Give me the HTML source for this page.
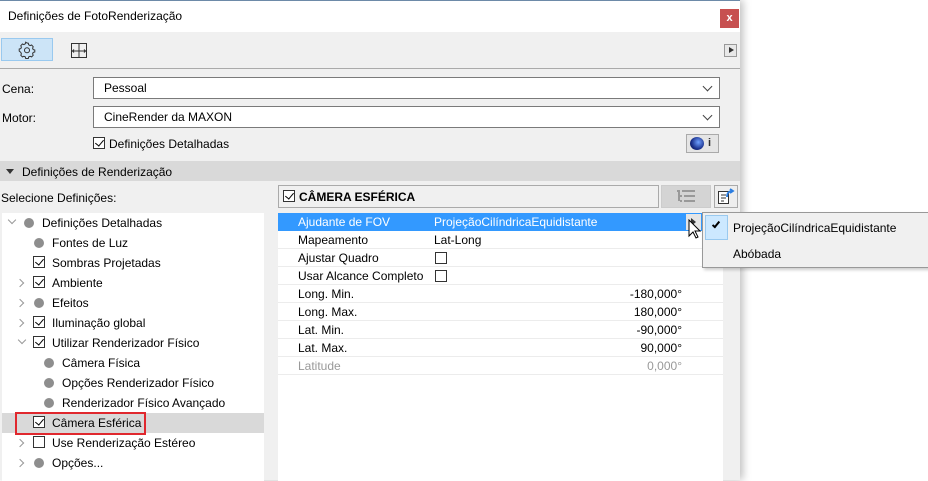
<!DOCTYPE html>
<html><head><meta charset="utf-8"><style>
*{box-sizing:border-box;margin:0;padding:0}
body{width:928px;height:480px;background:#fff;font-family:"Liberation Sans",sans-serif;font-size:12px;color:#000;position:relative;overflow:hidden}
.a{position:absolute}
.dlg{left:0;top:0;width:740px;height:480px;background:#f0f0f0;box-shadow:3px 0 8px rgba(0,0,0,.25);border-top:1px solid #6d8aa8}
.cb{position:absolute;width:12px;height:12px;border:1px solid #333;background:#fff}
.cb.c::after{content:"";position:absolute;left:3px;top:0px;width:4px;height:7px;border:solid #000;border-width:0 1.6px 1.6px 0;transform:rotate(40deg)}
.dd{position:absolute;left:93px;width:627px;height:22px;border:1px solid #7a7a7a;background:#fff;padding:3px 10px}
.dd::after{content:"";position:absolute;right:8px;top:5px;width:6px;height:6px;border:solid #444;border-width:0 1px 1px 0;transform:rotate(45deg)}
.dot{position:absolute;width:10px;height:10px;border-radius:50%;background:#8e8e8e}
.arr{position:absolute;width:6px;height:6px;border:solid #999;border-width:0 1.3px 1.3px 0}
.r{position:absolute;left:0;width:445px;height:18px;border-bottom:1px solid #ececec}
.r span{position:absolute;top:2px}
</style></head><body>
<div class="a dlg">
 <div class="a" style="left:0;top:0;width:740px;height:31px;background:#fff"></div>
 <div class="a" style="left:8px;top:8px;font-size:12px">Definições de FotoRenderização</div>
 <div class="a" style="left:720px;top:8px;width:19px;height:19px;background:#c75050;color:#fff;font-size:11px;text-align:center;line-height:18px;font-weight:bold">x</div>
 <div class="a" style="left:1px;top:37px;width:52px;height:23px;background:#cce4f7;border:1px solid #99c9ef"></div>
 <svg class="a" style="left:18px;top:40px" width="18" height="18" viewBox="0 0 18 18"><path d="M9 2l1.3.2.4 1.6 1.4.8 1.5-.6 1.6 1.7-.6 1.5.6 1.4 1.6.4v2l-1.6.4-.6 1.4.6 1.5-1.6 1.6-1.5-.6-1.4.6-.4 1.6H7.7l-.4-1.6-1.4-.6-1.5.6-1.6-1.6.6-1.5-.6-1.4L1.2 10V8l1.6-.4.6-1.4-.6-1.5L4.4 3l1.5.6 1.4-.8.4-1.6z" fill="none" stroke="#333" stroke-width="1"/><circle cx="9" cy="9.2" r="2.5" fill="none" stroke="#333"/></svg>
 <svg class="a" style="left:71px;top:42px" width="16" height="15"><rect x=".5" y=".5" width="15" height="14" fill="none" stroke="#333"/><path d="M8 1v13M1 8h14M3 6.5l-1.5 1.5L3 9.5M13 6.5l1.5 1.5L13 9.5" fill="none" stroke="#333"/></svg>
 <div class="a" style="left:724px;top:43px;width:13px;height:13px;border:1px solid #999;background:#e8e8e8"></div>
 <div class="a" style="left:729px;top:46px;border-left:5px solid #333;border-top:3.5px solid transparent;border-bottom:3.5px solid transparent"></div>
 <div class="a" style="left:0;top:67px;width:740px;height:1px;background:#aaa"></div>
 <div class="a" style="left:2px;top:81px">Cena:</div>
 <div class="dd" style="top:76px">Pessoal</div>
 <div class="a" style="left:2px;top:110px">Motor:</div>
 <div class="dd" style="top:105px">CineRender da MAXON</div>
 <div class="cb c" style="left:93px;top:136px"></div>
 <div class="a" style="left:109px;top:136px">Definições Detalhadas</div>
 <div class="a" style="left:686px;top:133px;width:33px;height:19px;border:1px solid #aaa;background:#e5e5e5"></div>
 <div class="a" style="left:690px;top:136px;width:14px;height:13px;border-radius:50%;background:radial-gradient(circle at 60% 40%,#6fa0ff,#1a2f8a 60%,#0a0f30)"></div>
 <div class="a" style="left:708px;top:136px;font-size:11px;color:#333;font-weight:bold">i</div>
 <div class="a" style="left:0;top:160px;width:740px;height:20px;background:#d9d9d9"></div>
 <div class="a" style="left:6px;top:168px;border-top:5px solid #333;border-left:4px solid transparent;border-right:4px solid transparent"></div>
 <div class="a" style="left:22px;top:164px">Definições de Renderização</div>
 <div class="a" style="left:1px;top:190px">Selecione Definições:</div>
 <!-- tree -->
 <div class="a" style="left:2px;top:212px;width:262px;height:268px;background:#fff">
  <div class="a" style="left:0;top:200px;width:262px;height:20px;background:#d9d9d9"></div>
  <div class="a" style="left:13px;top:199px;width:131px;height:23px;border:2px solid #e0282e"></div>
 </div>
 <div class="arr" style="left:9px;top:216px;transform:rotate(45deg)"></div>
 <div class="dot" style="left:24px;top:217px"></div><div class="a" style="left:42px;top:215px">Definições Detalhadas</div>
 <div class="dot" style="left:34px;top:237px"></div><div class="a" style="left:52px;top:235px">Fontes de Luz</div>
 <div class="cb c" style="left:33px;top:255px"></div><div class="a" style="left:52px;top:255px">Sombras Projetadas</div>
 <div class="arr" style="left:17px;top:279px;transform:rotate(-45deg)"></div>
 <div class="cb c" style="left:33px;top:275px"></div><div class="a" style="left:52px;top:275px">Ambiente</div>
 <div class="arr" style="left:17px;top:299px;transform:rotate(-45deg)"></div>
 <div class="dot" style="left:34px;top:297px"></div><div class="a" style="left:52px;top:295px">Efeitos</div>
 <div class="arr" style="left:17px;top:319px;transform:rotate(-45deg)"></div>
 <div class="cb c" style="left:33px;top:315px"></div><div class="a" style="left:52px;top:315px">Iluminação global</div>
 <div class="arr" style="left:19px;top:336px;transform:rotate(45deg)"></div>
 <div class="cb c" style="left:33px;top:335px"></div><div class="a" style="left:52px;top:335px">Utilizar Renderizador Físico</div>
 <div class="dot" style="left:44px;top:357px"></div><div class="a" style="left:62px;top:355px">Câmera Física</div>
 <div class="dot" style="left:44px;top:377px"></div><div class="a" style="left:62px;top:375px">Opções Renderizador Físico</div>
 <div class="dot" style="left:44px;top:397px"></div><div class="a" style="left:62px;top:395px">Renderizador Físico Avançado</div>
 <div class="cb c" style="left:33px;top:415px"></div><div class="a" style="left:52px;top:415px">Câmera Esférica</div>
 <div class="arr" style="left:17px;top:439px;transform:rotate(-45deg)"></div>
 <div class="cb" style="left:33px;top:435px"></div><div class="a" style="left:52px;top:435px">Use Renderização Estéreo</div>
 <div class="arr" style="left:17px;top:459px;transform:rotate(-45deg)"></div>
 <div class="dot" style="left:34px;top:457px"></div><div class="a" style="left:52px;top:455px">Opções...</div>
 <!-- right header -->
 <div class="a" style="left:278px;top:184px;width:381px;height:23px;border:1px solid #aaa;background:#f0f0f0"></div>
 <div class="cb c" style="left:283px;top:189px"></div>
 <div class="a" style="left:299px;top:189px;font-weight:bold">CÂMERA ESFÉRICA</div>
 <div class="a" style="left:661px;top:184px;width:50px;height:23px;background:#d4d4d4;border:1px solid #ccc"></div>
 <svg class="a" style="left:677px;top:189px" width="18" height="13"><path d="M0 1h3M5 1h13M3 6h2M7 6h11M3 11h2M7 11h11M2 2v9" stroke="#999" stroke-width="2" fill="none"/></svg>
 <div class="a" style="left:714px;top:184px;width:24px;height:23px;border:1px solid #aaa;background:#eee"></div>
 <svg class="a" style="left:717px;top:186px" width="20" height="18"><rect x="1.5" y="4.5" width="10" height="12" fill="#fff" stroke="#333"/><path d="M4 8h5M4 11h5M4 14h3" stroke="#333"/><path d="M10 10c0-4 2-6 5-6M13 2l3 2-3 2" stroke="#2a7de1" stroke-width="1.8" fill="none"/></svg>
 <!-- props -->
 <div class="a" style="left:278px;top:212px;width:445px;height:268px;background:#fff">
  <div class="r" style="top:0;background:#3399ff;color:#fff;border:none"><span style="left:20px">Ajudante de FOV</span><span style="left:156px">ProjeçãoCilíndricaEquidistante</span></div>
  <div class="a" style="left:408px;top:1px;width:15px;height:16px;background:#e5e5e5"></div>
  <div class="a" style="left:413px;top:5px;border-left:5px solid #333;border-top:4px solid transparent;border-bottom:4px solid transparent"></div>
  <div class="r" style="top:18px"><span style="left:20px">Mapeamento</span><span style="left:156px">Lat-Long</span></div>
  <div class="r" style="top:36px"><span style="left:20px">Ajustar Quadro</span></div>
  <div class="cb" style="left:157px;top:39px"></div>
  <div class="r" style="top:54px"><span style="left:20px">Usar Alcance Completo</span></div>
  <div class="cb" style="left:157px;top:57px"></div>
  <div class="r" style="top:72px"><span style="left:20px">Long. Min.</span><span style="right:41px">-180,000°</span></div>
  <div class="r" style="top:90px"><span style="left:20px">Long. Max.</span><span style="right:41px">180,000°</span></div>
  <div class="r" style="top:108px"><span style="left:20px">Lat. Min.</span><span style="right:41px">-90,000°</span></div>
  <div class="r" style="top:126px"><span style="left:20px">Lat. Max.</span><span style="right:41px">90,000°</span></div>
  <div class="r" style="top:144px;color:#999"><span style="left:20px">Latitude</span><span style="right:41px">0,000°</span></div>
 </div>
 <svg class="a" style="left:688px;top:218px" width="14" height="22"><path d="M1 1v16l4-4 3 6 2-1-3-6h5z" fill="#fff" stroke="#000"/></svg>
</div>
<!-- popup -->
<div class="a" style="left:702px;top:212px;width:230px;height:56px;background:#f0f0f0;border:1px solid #999;box-shadow:2px 2px 3px rgba(0,0,0,.2)"></div>
<div class="a" style="left:705px;top:215px;width:23px;height:25px;background:#cce8ff;border:1px solid #99c9ef"></div>
<div class="a" style="left:714px;top:220px;width:4px;height:8px;border:solid #000;border-width:0 2px 2px 0;transform:rotate(40deg)"></div>
<div class="a" style="left:733px;top:221px">ProjeçãoCilíndricaEquidistante</div>
<div class="a" style="left:733px;top:247px">Abóbada</div>
</body></html>
